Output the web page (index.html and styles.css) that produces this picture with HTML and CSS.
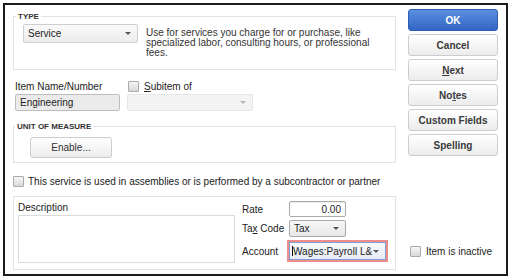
FILE: index.html
```html
<!DOCTYPE html>
<html>

<head>
    <title>New Item - Service</title>
    <link rel="stylesheet" href="styles.css">
</head>

<body>
    <div class="dialog">
        <div class="main">
            <fieldset class="group type-group">
                <legend>TYPE</legend>
                <div class="type-row">
                    <div class="select type-select"><span>Service</span><span class="caret"></span></div>
                    <p class="type-note">Use for services you charge for or purchase, like specialized labor, consulting hours, or professional fees.</p>
                </div>
            </fieldset>

            <div class="name-row">
                <div class="field name-field">
                    <label class="field-label">Item Name/Number</label>
                    <div class="input name-input">Engineering</div>
                </div>
                <div class="field sub-field">
                    <label class="check"><span class="box"></span><span><u>S</u>ubitem of</span></label>
                    <div class="select sub-select"><span></span><span class="caret"></span></div>
                </div>
            </div>

            <fieldset class="group uom-group">
                <legend>UNIT OF MEASURE</legend>
                <button class="btn enable-btn">Enable...</button>
            </fieldset>

            <label class="check assembly"><span class="box"></span><span>This service is used in assemblies or is performed by a subcontractor or partner</span></label>

            <div class="detail-group">
                <div class="desc">
                    <label class="field-label">Description</label>
                    <div class="textarea"></div>
                </div>
                <div class="props">
                    <label>Rate</label>
                    <div class="input rate-input">0.00</div>
                    <label>Ta<u>x</u> Code</label>
                    <div class="select tax-select"><span>Tax</span><span class="caret"></span></div>
                    <label>Account</label>
                    <div class="account-wrap">
                        <div class="select account-select"><span><i class="cursor"></i>Wages:Payroll L&amp;</span><span class="caret"></span></div>
                    </div>
                </div>
            </div>
        </div>

        <div class="side">
            <button class="btn primary">OK</button>
            <button class="btn">Cancel</button>
            <button class="btn"><u>N</u>ext</button>
            <button class="btn">No<u>t</u>es</button>
            <button class="btn">Custom Fields</button>
            <button class="btn">Spelling</button>
            <label class="check inactive"><span class="box"></span><span>Item is inactive</span></label>
        </div>
    </div>
</body>

</html>
```

FILE: styles.css
```css
body {
    margin: 0;
    background-color: #fff;
    font-family: "Liberation Sans", Arial, sans-serif;
    font-size: 10px;
    color: #222;
}

.dialog {
    margin: 3px;
    width: 505px;
    height: 273px;
    box-sizing: border-box;
    border: 2px solid #1c1c1c;
    background-color: #fff;
    display: flex;
    gap: 12px;
    padding: 0 8px;
}

.main {
    width: 383px;
    display: flex;
    flex-direction: column;
}

/* group boxes */
.group {
    margin: 0;
    border: 1px solid #e3e3e3;
    min-width: 0;
}

.group legend {
    font-size: 8px;
    line-height: 9px;
    font-weight: bold;
    color: #333;
    padding: 0 2px;
}

.type-group {
    margin-top: 7px;
    padding: 3px 9px 11px;
}

.type-group legend {
    margin-left: -7px;
}

.type-row {
    display: flex;
    gap: 8px;
}

.type-note {
    margin: 4px 0 0;
    width: 235px;
    line-height: 10px;
    color: #333;
}

/* form controls */
.select {
    display: flex;
    align-items: center;
    justify-content: space-between;
    box-sizing: border-box;
    border: 1px solid #cfcfcf;
    border-radius: 2px;
    background: linear-gradient(#fafafa, #ececec);
    padding: 0 6px 0 4px;
}

.caret {
    width: 0;
    height: 0;
    border-left: 3px solid transparent;
    border-right: 3px solid transparent;
    border-top: 3px solid #555;
}

.type-select {
    width: 115px;
    height: 19px;
}

.input {
    box-sizing: border-box;
    border: 1px solid #c4c4c4;
    border-radius: 2px;
    padding: 0 4px;
    display: flex;
    align-items: center;
}

.name-row {
    display: flex;
    gap: 7px;
    margin-top: 11px;
    padding-left: 2px;
}

.field {
    display: flex;
    flex-direction: column;
    gap: 2px;
}

.field-label {
    line-height: 11px;
}

.name-input {
    width: 105px;
    height: 17px;
    background-color: #ebebeb;
    border-color: #bdbdbd;
}

.sub-field .check {
    padding-left: 1px;
}

.sub-select {
    width: 126px;
    height: 17px;
    background: #f4f4f4;
    border-color: #e6e6e6;
}

.sub-select .caret {
    border-top-color: #b5b5b5;
}

/* checkboxes */
.check {
    display: flex;
    align-items: center;
    gap: 5px;
    line-height: 11px;
}

.box {
    width: 11px;
    height: 11px;
    box-sizing: border-box;
    border: 1px solid #ababab;
    border-radius: 1px;
    background: linear-gradient(#f5f5f5, #d9d9d9);
}

.uom-group {
    margin-top: 11px;
    padding: 6px 16px 4px;
}

.uom-group legend {
    margin-left: -15px;
}

.assembly {
    margin-top: 13px;
    gap: 4px;
}

/* buttons */
.btn {
    box-sizing: border-box;
    border: 1px solid #cdcdcd;
    border-radius: 3px;
    background: linear-gradient(#ffffff, #ececec);
    font-family: inherit;
    font-size: 10px;
    font-weight: bold;
    color: #3a3a3a;
    padding: 0;
    cursor: pointer;
}

.enable-btn {
    width: 82px;
    height: 21px;
    font-weight: normal;
    color: #333;
}

.side {
    width: 90px;
    display: flex;
    flex-direction: column;
    gap: 3px;
    padding: 4px 0 17px;
}

.side .btn {
    height: 22px;
}

.btn.primary {
    background: linear-gradient(#5a8ee0, #3366c4);
    border-color: #2c5cb3;
    color: #fff;
}

.inactive {
    margin-top: auto;
    padding-left: 2px;
}

/* description / rate block */
.detail-group {
    margin-top: 9px;
    border: 1px solid #e3e3e3;
    display: flex;
    gap: 7px;
    padding: 5px 0 6px 4px;
}

.desc {
    display: flex;
    flex-direction: column;
    gap: 2px;
}

.textarea {
    width: 217px;
    height: 48px;
    box-sizing: border-box;
    border: 1px solid #dcdcdc;
}

.props {
    display: grid;
    grid-template-columns: 47px auto;
    grid-template-rows: 16px 17px 22px;
    row-gap: 3px;
    align-items: center;
    margin-top: -1px;
}

.rate-input {
    width: 57px;
    height: 16px;
    justify-content: flex-end;
    border-color: #a9a9a9;
    box-shadow: inset 0 1px 1px rgba(0, 0, 0, 0.08);
}

.tax-select {
    width: 57px;
    height: 17px;
    border-color: #a9a9a9;
    background: linear-gradient(#f7f7f7, #e8e8e8);
}

.account-wrap {
    margin-left: -2px;
    width: 101px;
    height: 22px;
    box-sizing: border-box;
    border: 2px solid #ef8c8c;
}

.account-select {
    height: 18px;
    border-color: #7e9fd6;
    border-radius: 0;
    background: linear-gradient(#f7f9fc, #e9edf3);
    padding-left: 2px;
}

.cursor {
    display: inline-block;
    width: 1px;
    height: 10px;
    background-color: #111;
    vertical-align: -1px;
}
```
